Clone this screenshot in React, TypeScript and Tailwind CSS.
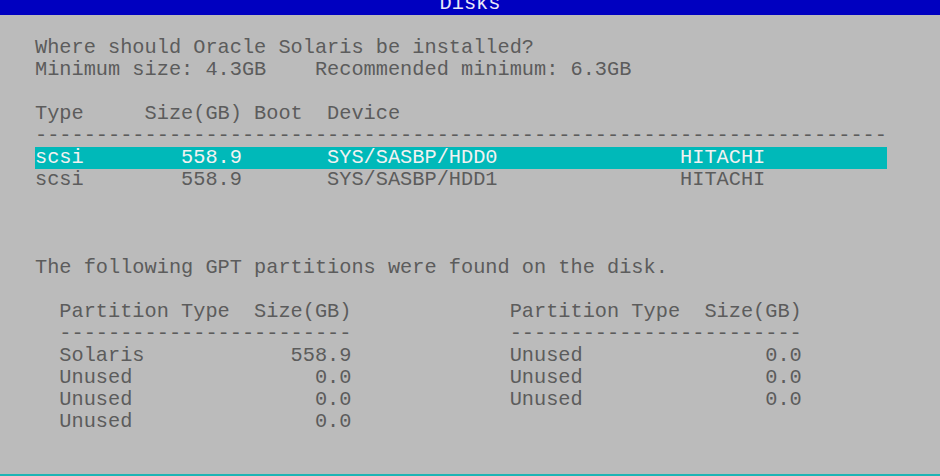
import React from "react";

const pad = (s: string, n: number) => s.padEnd(n, " ");
const at = (parts: [number, string][]) => {
  let out = "";
  for (const [col, txt] of parts) {
    out = pad(out, col) + txt;
  }
  return out;
};

const lines: { text: string; hl?: boolean }[] = [
  { text: "" },
  { text: "Where should Oracle Solaris be installed?" },
  { text: "Minimum size: 4.3GB    Recommended minimum: 6.3GB" },
  { text: "" },
  { text: at([[0, "Type"], [9, "Size(GB)"], [18, "Boot"], [24, "Device"]]) },
  { text: "-".repeat(70) },
  { text: pad(at([[0, "scsi"], [12, "558.9"], [24, "SYS/SASBP/HDD0"], [53, "HITACHI"]]), 70), hl: true },
  { text: at([[0, "scsi"], [12, "558.9"], [24, "SYS/SASBP/HDD1"], [53, "HITACHI"]]) },
  { text: "" },
  { text: "" },
  { text: "" },
  { text: "The following GPT partitions were found on the disk." },
  { text: "" },
  { text: at([[2, "Partition Type"], [18, "Size(GB)"], [39, "Partition Type"], [55, "Size(GB)"]]) },
  { text: at([[2, "-".repeat(24)], [39, "-".repeat(24)]]) },
  { text: at([[2, "Solaris"], [21, "558.9"], [39, "Unused"], [60, "0.0"]]) },
  { text: at([[2, "Unused"], [23, "0.0"], [39, "Unused"], [60, "0.0"]]) },
  { text: at([[2, "Unused"], [23, "0.0"], [39, "Unused"], [60, "0.0"]]) },
  { text: at([[2, "Unused"], [23, "0.0"]]) },
  { text: "" },
  { text: "" },
];

export default function App() {
  return (
    <div
      className="w-[940px] h-[476px] bg-[#bbbbbb] flex flex-col overflow-hidden text-[20.3px] text-[#5c5c5c]"
      style={{ fontFamily: '"Liberation Mono", "Courier New", monospace' }}
    >
      <div className="h-[15px] bg-[#0000c0] overflow-hidden shrink-0">
        <div className="h-[22px] leading-[22px] -mt-[7px] text-center text-[#e8e8f8] whitespace-pre">Disks</div>
      </div>
      <div className="flex-1 overflow-hidden pl-[35px]">
        {lines.map((l, i) => (
          <div key={i} className="h-[22px] leading-[22px] whitespace-pre">
            {l.hl ? (
              <span className="inline-block h-[22px] bg-[#00b9b9] text-[#f2f2f2]">{l.text}</span>
            ) : (
              l.text || "\u00a0"
            )}
          </div>
        ))}
      </div>
      <div className="h-[2px] bg-[#1fb4b4] shrink-0" />
    </div>
  );
}
